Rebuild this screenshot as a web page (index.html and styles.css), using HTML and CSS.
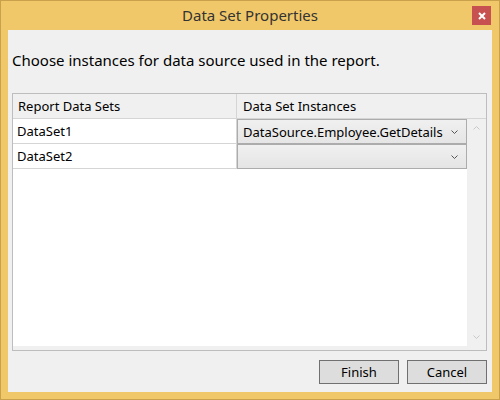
FILE: index.html
```html
<!DOCTYPE html>
<html>
<head>
<meta charset="utf-8">
<link rel="stylesheet" href="styles.css">
</head>
<body>
<div class="window">
  <div class="titlebar">
    <div class="title">Data Set Properties</div>
    <div class="close"><svg width="8" height="8" viewBox="0 0 8 8"><path d="M1 1L7 7M7 1L1 7" stroke="#fff" stroke-width="2" fill="none"/></svg></div>
  </div>
  <div class="client">
    <div class="prompt">Choose instances for data source used in the report.</div>
    <div class="grid">
      <div class="header">
        <div class="hcell c1">Report Data Sets</div>
        <div class="hcell c2">Data Set Instances</div>
      </div>
      <div class="body">
        <div class="rows">
          <div class="row">
            <div class="cell c1">DataSet1</div>
            <div class="combo"><span class="ctext">DataSource.Employee.GetDetails</span><svg class="chev" width="7" height="4" viewBox="0 0 7 4"><path d="M0.5 0.5L3.5 3.5L6.5 0.5" stroke="#555" stroke-width="1" fill="none"/></svg></div>
          </div>
          <div class="row">
            <div class="cell c1">DataSet2</div>
            <div class="combo"><span class="ctext"></span><svg class="chev" width="7" height="4" viewBox="0 0 7 4"><path d="M0.5 0.5L3.5 3.5L6.5 0.5" stroke="#555" stroke-width="1" fill="none"/></svg></div>
          </div>
        </div>
        <div class="vscroll">
          <svg width="7" height="4" viewBox="0 0 7 4"><path d="M0.5 3.5L3.5 0.5L6.5 3.5" stroke="#c8c8c8" stroke-width="1" fill="none"/></svg>
          <svg width="7" height="4" viewBox="0 0 7 4"><path d="M0.5 0.5L3.5 3.5L6.5 0.5" stroke="#c8c8c8" stroke-width="1" fill="none"/></svg>
        </div>
      </div>
    </div>
    <div class="buttons">
      <div class="btn">Finish</div>
      <div class="btn">Cancel</div>
    </div>
  </div>
</div>
</body>
</html>
```

FILE: styles.css
```css
html, body {
  margin: 0;
  padding: 0;
}
body {
  width: 500px;
  height: 400px;
  font-family: "Noto Sans", "Open Sans", sans-serif;
  color: #000;
}
.window {
  box-sizing: border-box;
  width: 500px;
  height: 400px;
  background: #f0c86a;
  border: 1px solid #c9a04b;
  display: flex;
  flex-direction: column;
}
.titlebar {
  height: 29px;
  display: flex;
  align-items: center;
  justify-content: center;
  position: relative;
}
.title {
  font-size: 15px;
  color: #333;
  line-height: 20px;
  margin-top: -2px;
}
.close {
  position: absolute;
  left: 471px;
  top: 5px;
  width: 19px;
  height: 19px;
  background: #c75050;
  display: flex;
  align-items: center;
  justify-content: center;
}
.client {
  margin: 0 7px 7px 7px;
  flex: 1;
  background: #f0f0f0;
  display: flex;
  flex-direction: column;
  padding: 20px 5px 8px 4px;
}
.prompt {
  font-size: 15px;
  line-height: 20px;
  margin-bottom: 23px;
}
.grid {
  height: 258px;
  box-sizing: border-box;
  border: 1px solid #bdbdbd;
  background: #f0f0f0;
  display: flex;
  flex-direction: column;
}
.header {
  height: 24px;
  border-bottom: 1px solid #d5d5d5;
  display: flex;
  font-size: 13px;
}
.hcell {
  line-height: 24px;
}
.hcell.c1 {
  width: 218px;
  padding-left: 5px;
  border-right: 1px solid #d5d5d5;
}
.hcell.c2 {
  flex: 1;
  padding-left: 6px;
}
.body {
  flex: 1;
  display: flex;
}
.rows {
  width: 454px;
  background: #fff;
  margin-bottom: 4px;
}
.row {
  display: flex;
  height: 25px;
  font-size: 13px;
}
.cell.c1 {
  width: 219px;
  padding-left: 4px;
  line-height: 24px;
  border-right: 1px solid #d5d5d5;
  border-bottom: 1px solid #d5d5d5;
}
.combo {
  box-sizing: border-box;
  width: 230px;
  height: 25px;
  border: 1px solid #acacac;
  background: linear-gradient(#f0f0f0, #e5e5e5);
  display: flex;
  align-items: center;
  padding: 0 8px 0 5px;
}
.ctext {
  flex: 1;
  line-height: 22px;
  white-space: nowrap;
  overflow: hidden;
}
.chev {
  display: block;
  flex: none;
}
.vscroll {
  width: 19px;
  background: #f0f0f0;
  display: flex;
  flex-direction: column;
  align-items: center;
  justify-content: space-between;
  padding: 7px 0 7px 0;
  margin-bottom: 4px;
  box-sizing: border-box;
}
.vscroll svg {
  display: block;
}
.buttons {
  display: flex;
  justify-content: flex-end;
  gap: 8px;
  margin-top: 9px;
}
.btn {
  box-sizing: border-box;
  width: 80px;
  height: 24px;
  border: 1px solid #707070;
  background: #dddddd;
  font-size: 13px;
  line-height: 22px;
  text-align: center;
}
```
